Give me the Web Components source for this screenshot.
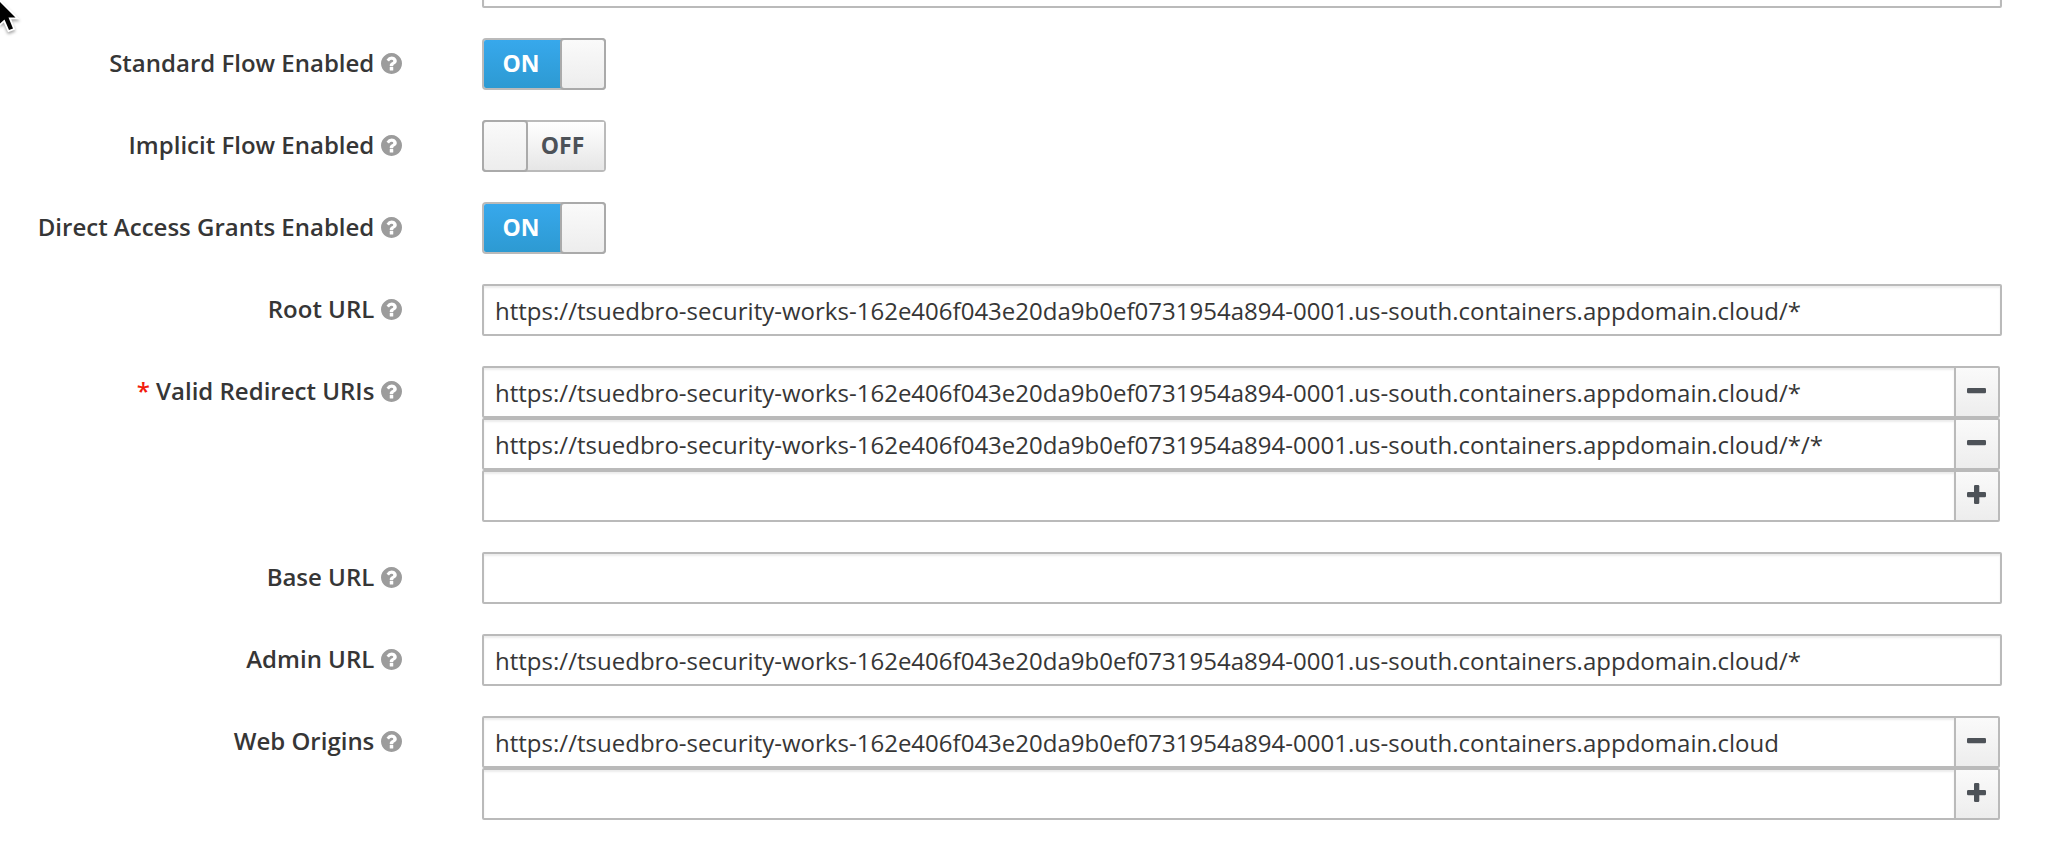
<!DOCTYPE html>
<html lang="en">
<head>
<meta charset="utf-8">
<title>Client settings</title>
<style>
html, body { margin: 0; height: 100%; overflow: hidden; background: #fff; }
body { font: 24px/32px "Open Sans", "Noto Sans", sans-serif; color: #363636; }
</style>
</head>
<body>
<settings-form>
  <text-field class="previous"></text-field>
  <form-row label="Standard Flow Enabled"><toggle-switch on></toggle-switch></form-row>
  <form-row label="Implicit Flow Enabled"><toggle-switch></toggle-switch></form-row>
  <form-row label="Direct Access Grants Enabled"><toggle-switch on></toggle-switch></form-row>
  <form-row label="Root URL"><text-field>https://tsuedbro-security-works-162e406f043e20da9b0ef0731954a894-0001.us-south.containers.appdomain.cloud/*</text-field></form-row>
  <form-row label="Valid Redirect URIs" required>
    <text-field action="minus">https://tsuedbro-security-works-162e406f043e20da9b0ef0731954a894-0001.us-south.containers.appdomain.cloud/*</text-field>
    <text-field action="minus">https://tsuedbro-security-works-162e406f043e20da9b0ef0731954a894-0001.us-south.containers.appdomain.cloud/*/*</text-field>
    <text-field action="plus"></text-field>
  </form-row>
  <form-row label="Base URL"><text-field></text-field></form-row>
  <form-row label="Admin URL"><text-field>https://tsuedbro-security-works-162e406f043e20da9b0ef0731954a894-0001.us-south.containers.appdomain.cloud/*</text-field></form-row>
  <form-row label="Web Origins">
    <text-field action="minus">https://tsuedbro-security-works-162e406f043e20da9b0ef0731954a894-0001.us-south.containers.appdomain.cloud</text-field>
    <text-field action="plus"></text-field>
  </form-row>
</settings-form>
<mouse-pointer></mouse-pointer>
<script>
const define = (name, render) => customElements.define(name, class extends HTMLElement {
  connectedCallback() {
    if (!this.shadowRoot) this.attachShadow({ mode: 'open' }).innerHTML = render(this);
  }
});

define('settings-form', () => `
<style>
  :host { display: flex; flex-direction: column; gap: 30px; width: 2052px; }
  ::slotted(.previous) { margin: -44px 50px 0 482px; }
</style>
<slot></slot>`);

define('help-icon', () => `
<style>:host { display: block; width: 21px; height: 21px; white-space: normal; } svg { display: block; fill: #9c9c9c; }</style>
<svg width="21" height="21" viewBox="128 128 1536 1536"><path d="M1024 1376v-192q0-14-9-23t-23-9h-192q-14 0-23 9t-9 23v192q0 14 9 23t23 9h192q14 0 23-9t9-23zm256-672q0-88-55.500-163t-138.500-116-170-41q-243 0-371 213-15 24 8 42l132 100q7 6 19 6 16 0 25-12 53-68 86-92 34-24 86-24 48 0 85.500 26t37.500 59q0 38-20 61t-68 45q-63 28-115.500 86.500t-52.500 125.500v36q0 14 9 23t23 9h192q14 0 23-9t9-23q0-19 21.500-49.500t54.500-49.500q32-18 49-28.500t46-35 44.500-48 28-60.500 12.500-81zm384 192q0 209-103 385.500t-279.500 279.500-385.500 103-385.500-103-279.500-279.500-103-385.500 103-385.500 279.500-279.500 385.500-103 385.500 103 279.500 279.500 103 385.500z"/></svg>`);

define('form-row', el => `
<style>
  :host { display: grid; grid-template-columns: 401.500px 1fr; column-gap: 80.500px; padding-right: 50px; align-items: start; }
  .label { display: flex; justify-content: flex-end; align-items: center; height: 32px; padding-top: 9px; font-weight: 600; white-space: pre; }
  .required { color: #f21b0c; }
  help-icon { margin-left: 6.200px; }
</style>
<div class="label">${el.hasAttribute('required') ? '<span class="required">* </span>' : ''}<span>${el.getAttribute('label')}</span><help-icon></help-icon></div>
<div><slot></slot></div>`);

define('toggle-switch', el => {
  const on = el.hasAttribute('on');
  return `
<style>
  :host { display: flex; box-sizing: border-box; width: 124px; height: 52px; border-radius: 4px;
    border: 2px solid #bababa; font-size: 23px; font-weight: 700; line-height: 46px; }
  .state { flex: 1; text-align: center; }
  .on { color: #fff; background: linear-gradient(#37a8ec, #2d9ad2); border-radius: 2px 0 0 2px; padding-right: 4px; }
  .off { color: #4d5258; background: linear-gradient(#fff, #e6e6e6); padding-right: 5px; }
  .thumb { position: relative; box-sizing: border-box; width: 46px; margin: -2px; border: 2px solid #aaa; border-radius: 4px;
    background: linear-gradient(#fafafa, #ededed); }
</style>
${on ? '<div class="state on">ON</div><div class="thumb"></div>' : '<div class="thumb"></div><div class="state off">OFF</div>'}`;
});

define('text-field', el => {
  const action = el.getAttribute('action');
  return `
<style>
  :host { display: flex; box-sizing: border-box; height: 52px; border: 2px solid #bababa; border-radius: 2px; background: #fff; }
  :host([action]) { margin-right: 2px; }
  .value { flex: 1; min-width: 0; box-shadow: inset 0 2px 2px rgba(3,3,3,.075); padding: 9px 11px 0; white-space: pre; letter-spacing: .012px; }
  .button { box-sizing: border-box; width: 44px; border-left: 2px solid #bababa; background: linear-gradient(#fafafa, #ededed); }
  svg { display: block; margin: 13px 0 0 11px; fill: #4d5258; }
</style>
<div class="value"><slot></slot></div>
${action ? `<div class="button"><svg width="19" height="19" viewBox="0 0 19 19"><rect y="7" width="19" height="5.300" rx="1.300"/>${action === 'plus' ? '<rect x="7" width="5.300" height="19" rx="1.300"/>' : ''}</svg></div>` : ''}`;
});

define('mouse-pointer', () => `
<style>:host { position: absolute; left: 0; top: 0; } svg { display: block; filter: drop-shadow(0 2px 1.500px rgba(0,0,0,.35)); }</style>
<svg width="30" height="42" viewBox="0 0 30 42"><path d="M-4-2L15.500 17.500H8.500L13 28.500L9 30L4.500 19.500L-4 27Z" stroke="#fff" stroke-width="3.600" paint-order="stroke"/></svg>`);
</script>
</body>
</html>
